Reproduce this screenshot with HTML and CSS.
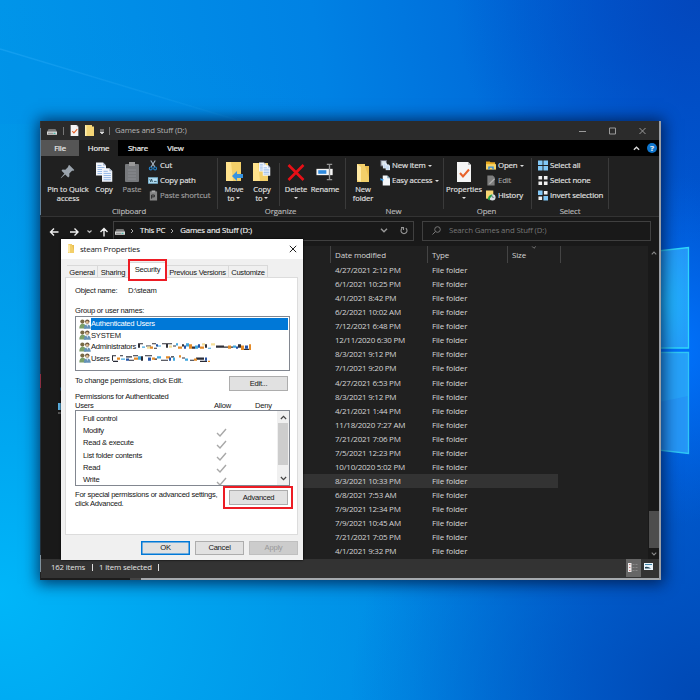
FILE: index.html
```
<!DOCTYPE html>
<html lang="en">
<head>
<meta charset="utf-8">
<title>Games and Stuff (D:)</title>
<link rel="stylesheet" href="styles.css">
</head>
<body>
<svg width="0" height="0" class="defs">
  <symbol id="drive" viewBox="0 0 10 6"><path d="M1.5 0h7l1.5 3H0z" fill="#777"/><rect y="2.6" width="10" height="3.2" fill="#d8d8d8"/><rect x="6.5" y="3.8" width="2" height="1" fill="#2a9"/><rect x="1" y="3.8" width="5" height="1" fill="#888"/></symbol>
  <symbol id="sheet" viewBox="0 0 16 20"><path d="M1 0h11l3 3v17H1z" fill="#f4f4f4"/><path d="M12 0v3h3" fill="#bbb"/><path d="M4 11l3 3.5 6-7" fill="none" stroke="#e8622a" stroke-width="2"/></symbol>
  <symbol id="folder" viewBox="0 0 12 18"><path d="M0 0h8v2h4v16H0z" fill="#f3cf69"/><path d="M0 0l4 3v15l-4-2z" fill="#ffe9a3"/><path d="M8 2h4v12z" fill="#e9bd50"/></symbol>
  <symbol id="page" viewBox="0 0 10 13"><path d="M0 0h7l3 3v10H0z" fill="#f2f5fb"/><path d="M7 0v3h3" fill="#aab8cc"/><path d="M1.5 3h4M1.5 5h7M1.5 7h7M1.5 9h7M1.5 11h7" stroke="#8eb4e4" stroke-width=".9"/></symbol>
  <symbol id="people" viewBox="0 0 12 10"><circle cx="3.4" cy="2.6" r="2.1" fill="#786a45"/><path d="M.3 9.5Q.3 4.8 3.7 4.8T7 9.5z" fill="#7ca06a"/><circle cx="8.3" cy="2.6" r="2.2" fill="#6d5740"/><circle cx="8.2" cy="3.3" r="1.3" fill="#e0bd92"/><path d="M4.8 9.8Q4.8 5.4 8.2 5.4T11.8 9.8z" fill="#6592b8"/><path d="M7.4 5.5h1.8l-.9 2.4z" fill="#eee"/></symbol>
  <symbol id="tick" viewBox="0 0 11 9"><path d="M1 5l3 3 6-7" fill="none" stroke="#a8a8a8" stroke-width="1.4"/></symbol>
  <symbol id="down" viewBox="0 0 8 5"><path d="M1 .8l3 3 3-3" fill="none" stroke="currentColor" stroke-width="1.4"/></symbol>
</svg>

<div class="desktop">
  <svg class="wallpaper" viewBox="0 0 700 700" preserveAspectRatio="none">
    <defs>
      <linearGradient id="base" x1="0" y1=".45" x2="1" y2=".3"><stop offset="0" stop-color="#0098ea"/><stop offset=".5" stop-color="#0082e4"/><stop offset="1" stop-color="#0056d0"/></linearGradient>
      <radialGradient id="bl" cx="0" cy=".85" r=".85"><stop offset="0" stop-color="#00b6f9"/><stop offset=".4" stop-color="#00a4ee" stop-opacity=".75"/><stop offset="1" stop-color="#0090e0" stop-opacity="0"/></radialGradient>
      <radialGradient id="br" cx="1" cy="1" r=".5"><stop offset="0" stop-color="#0048b4"/><stop offset="1" stop-color="#0054c4" stop-opacity="0"/></radialGradient>
      <radialGradient id="tr" cx="1" cy="0" r=".35"><stop offset="0" stop-color="#0347bc"/><stop offset="1" stop-color="#004cc4" stop-opacity="0"/></radialGradient>
      <radialGradient id="glow" cx=".95" cy=".5" r=".25"><stop offset="0" stop-color="#0074ff"/><stop offset="1" stop-color="#0068f0" stop-opacity="0"/></radialGradient>
      <radialGradient id="pane" cx=".5" cy=".55" r=".7"><stop offset="0" stop-color="#20b8ff"/><stop offset="1" stop-color="#2596f8"/></radialGradient>
      <linearGradient id="beam" x1="0" y1="0" x2="1" y2="0"><stop offset="0" stop-color="#3cb4ff" stop-opacity=".3"/><stop offset="1" stop-color="#3cb4ff" stop-opacity=".08"/></linearGradient>
    </defs>
    <rect width="700" height="700" fill="url(#base)"/>
    <rect width="700" height="700" fill="url(#bl)"/>
    <rect width="700" height="700" fill="url(#br)"/>
    <rect width="700" height="700" fill="url(#tr)"/>
    <rect width="700" height="700" fill="url(#glow)"/>
    <path d="M0 49L250 124" stroke="url(#beam)" stroke-width="1.5"/>
    <path d="M0 50L250 124H0z" fill="#008cf0" opacity=".12"/>
    <path d="M640 253L688.500 247.500V348H640z" fill="url(#pane)" stroke="#2fd8fa" stroke-width="1.3"/>
    <path d="M640 352.500H688.500V453.500L640 448z" fill="#2596f6" stroke="#2fc8f6" stroke-width="1.3"/>
    <path d="M640 406L688 396V353H640z" fill="#28acfa" opacity=".55"/>
  </svg>

  <main class="explorer">
    <header class="titlebar">
      <svg class="drive"><use href="#drive"/></svg><i class="bar"></i>
      <svg class="qsheet"><use href="#sheet"/></svg>
      <svg class="qfolder" viewBox="0 0 9 11"><path d="M0 0h7v1.500h2V11H0z" fill="#f5d677"/><path d="M0 0l1.500 1v10H0z" fill="#ffefb0"/></svg>
      <svg class="qmore" viewBox="0 0 6 6"><path d="M1 1h4M1 3h4L3 5z" stroke="#ddd" fill="#ddd" stroke-width=".8"/></svg><i class="bar"></i>
      <span class="wtitle">Games and Stuff (D:)</span>
      <svg class="controls" viewBox="0 0 70 8"><path d="M1 4.500h7M31.500 1h6v6h-6zM61.500 1l6 6M67.500 1l-6 6" fill="none" stroke="#9a9a9a"/></svg>
    </header>
    <nav class="tabs">
      <span class="file">File</span><span class="home">Home</span><span class="share">Share</span><span class="view">View</span>
      <svg class="collapse" viewBox="0 0 8 5"><path d="M1 4l3-3 3 3" fill="none" stroke="#ddd" stroke-width="1.5"/></svg>
      <span class="help">?</span>
    </nav>

    <section class="ribbon">
      <div class="group clipboard">
        <div class="tools">
          <div class="big pin"><svg viewBox="0 0 16 20"><path d="M9.300 3l5 5-1.200.9-.8-.3-3 3 .1 2.700-1.200 1.100-3-3L1 16.200l-.3-.3 3.700-4.300-2.900-2.900 1-1.200 2.800.2 3-3-.3-.8z" fill="#9ba4ad"/></svg><span>Pin to Quick<br>access</span></div>
          <div class="big copy"><svg viewBox="0 0 18 20"><use href="#page" x="1" y="0" width="10" height="14"/><use href="#page" x="7" y="6" width="10.500" height="14"/></svg><span>Copy</span></div>
          <div class="big paste"><svg viewBox="0 0 14 20"><rect x="0" y="2" width="14" height="18" rx="1" fill="#77797c"/><rect x="4" y="0" width="6" height="4" fill="#999"/><path d="M3 8h8M3 11h8M3 14h8M3 17h8" stroke="#8b8d91"/></svg><span>Paste</span></div>
          <div class="small">
            <div><svg viewBox="0 0 11 11"><path d="M3 0l4.500 7M8 0L3.500 7" stroke="#a8b6c4" stroke-width="1.200"/><circle cx="3" cy="8.700" r="1.600" fill="none" stroke="#2485cf" stroke-width="1.200"/><circle cx="7.800" cy="8.700" r="1.600" fill="none" stroke="#2485cf" stroke-width="1.200"/></svg>Cut</div>
            <div><svg viewBox="0 0 11 11"><rect x=".5" y="2.500" width="10" height="6" fill="#b9e2f5" stroke="#7db9d8"/><path d="M2 4l1 3 1-3 1 3M6.500 6.500h3" fill="none" stroke="#134" stroke-width=".8"/></svg>Copy path</div>
            <div class="dim"><svg viewBox="0 0 11 11"><rect x="2" y="1" width="8" height="10" fill="#858585"/><rect x="4" width="4" height="2" fill="#aaa"/><path d="M4 9V5h3v2H4" fill="none" stroke="#222"/></svg>Paste shortcut</div>
          </div>
        </div>
        <footer>Clipboard</footer>
      </div>
      <div class="group organize">
        <div class="tools">
          <div class="big move"><svg viewBox="0 0 18 20"><rect x="1" width="15" height="19" fill="#f3cf69"/><path d="M1 0h5l2 19H1z" fill="#ffe28c"/><path d="M7 14l5-5v3h6v4h-6v3z" fill="#3793e0"/></svg><span>Move<br>to <b></b></span></div>
          <div class="big copyto"><svg viewBox="0 0 18 20"><rect x="0" y="1" width="15" height="18" fill="#f3cf69"/><path d="M0 1h5l2 18H0z" fill="#ffe28c"/><use href="#page" x="6" y="0" width="7" height="10"/><use href="#page" x="9.500" y="3" width="8" height="11"/></svg><span>Copy<br>to <b></b></span></div>
          <i class="split"></i>
          <div class="big delete"><svg viewBox="0 0 18 20"><path d="M1.500 3l15 15M16.500 3l-15 15" stroke="#e80f16" stroke-width="2.600"/></svg><span>Delete<br><b></b></span></div>
          <div class="big rename"><svg viewBox="0 0 20 20"><rect x=".5" y="6.500" width="18" height="7" fill="#f5f5f5"/><rect x="2.500" y="8" width="9" height="4" fill="#2f8ade"/><path d="M12 1.500h2.500L15 2l.5-.5H18M15 2v16M12 18.500h2.500L15 18l.5.5H18" stroke="#929292" stroke-width="1.500" fill="none"/></svg><span>Rename</span></div>
        </div>
        <footer>Organize</footer>
      </div>
      <div class="group new">
        <div class="tools">
          <div class="big newfolder"><svg viewBox="0 0 18 20"><use href="#folder" x="3" y="2" width="12" height="18"/></svg><span>New<br>folder</span></div>
          <div class="small">
            <div><svg viewBox="0 0 11 11"><rect x="1" width="6" height="6" fill="#d4dce4" stroke="#667"/><use href="#page" x="3" y="2" width="5" height="7"/><use href="#page" x="6" y="4" width="5" height="7"/></svg>New item <b></b></div>
            <div><svg viewBox="0 0 11 11"><path d="M3 0h5l3 3v8H3z" fill="#f4f7fa"/><path d="M8 0v3h3" fill="#8ab"/><path d="M0 3l4 1-1 3-1-2-1 1z" fill="#3b99e0"/></svg>Easy access <b></b></div>
          </div>
        </div>
        <footer>New</footer>
      </div>
      <div class="group open">
        <div class="tools">
          <div class="big props"><svg viewBox="0 0 18 20"><use href="#sheet" x="1" y="0" width="16" height="20"/></svg><span>Properties<br><b></b></span></div>
          <div class="small">
            <div><svg viewBox="0 0 11 11"><path d="M0 1h4l1 1h5v7H0z" fill="#e9a91f"/><path d="M0 4h11v6H0z" fill="#f8d568"/><path d="M2.500 10V6.500h6V10H7V8H4v2z" fill="#2f8ade"/></svg>Open <b></b></div>
            <div class="dim"><svg viewBox="0 0 11 11"><path d="M1.500 0h6l2 2v9h-8z" fill="#7e7e7e"/><path d="M10 4L5 9l-2 1 1-2 5-5z" fill="#b0b0b0"/></svg>Edit</div>
            <div><svg viewBox="0 0 11 11"><path d="M0 0h8v9H0z" fill="#f7d673"/><circle cx="7" cy="7.500" r="3.500" fill="#d7dde0"/><path d="M2 10q0-5 5-6L6 7q-2 1-2 4z" fill="#25a244"/><path d="M7 5.500v2h2" stroke="#456" fill="none" stroke-width=".7"/></svg>History</div>
          </div>
        </div>
        <footer>Open</footer>
      </div>
      <div class="group select">
        <div class="tools">
          <div class="small">
            <div><svg viewBox="0 0 11 11"><path d="M0 0h5v5H0zM6 0h5v5H6zM0 6h5v5H0zM6 6h5v5H6z" fill="#82c7f5"/></svg>Select all</div>
            <div><svg viewBox="0 0 11 11"><path d="M.5.500h4v4h-4zM6.500.500h4v4h-4zM.5 6.500h4v4h-4zM6.500 6.500h4v4h-4z" fill="#f0f0f0"/></svg>Select none</div>
            <div><svg viewBox="0 0 11 11"><path d="M0 0h5v5H0zM6 6h5v5H6z" fill="#82c7f5"/><path d="M6.500.500h4v4h-4zM.5 6.500h4v4h-4z" fill="#f0f0f0"/></svg>Invert selection</div>
          </div>
        </div>
        <footer>Select</footer>
      </div>
    </section>

    <section class="address">
      <svg class="arrows" viewBox="0 0 62 10"><path d="M9.500 5H2M5 1.500L1.500 5 5 8.500M21 5h7.500M25.500 1.500L29 5l-3.500 3.500M55 9.500V2M51.500 5L55 1.500 58.500 5" fill="none" stroke="#f0f0f0" stroke-width="1.400"/><path d="M38.500 3.500l2 2 2-2" fill="none" stroke="#bbb" stroke-width="1.200"/></svg>
      <div class="path">
        <svg class="drive"><use href="#drive"/></svg><svg class="chev" viewBox="0 0 4 6"><path d="M1 1l2 2-2 2" stroke="#aaa" fill="none"/></svg><span class="pc">This PC</span><svg class="chev" viewBox="0 0 4 6"><path d="M1 1l2 2-2 2" stroke="#aaa" fill="none"/></svg><span class="vol">Games and Stuff (D:)</span>
        <svg class="drop"><use href="#down"/></svg>
        <svg class="refresh" viewBox="0 0 8 9"><path d="M2.200 2.300A3 3 0 1 0 5.800 2.300M1 1.500h2.500V4" fill="none" stroke="#999" stroke-width="1.100"/></svg>
      </div>
      <div class="search"><svg viewBox="0 0 9 9"><circle cx="5.500" cy="3.500" r="2.800" fill="none" stroke="#777"/><path d="M3.500 5.500L.5 8.500" stroke="#777"/></svg><span>Search Games and Stuff (D:)</span></div>
    </section>

    <section class="body">
      <aside class="navpane"><svg viewBox="0 0 5 30"><path d="M5 2a3.500 3.500 0 0 0 0 6z" fill="#1684d8"/><path d="M1 19h4v7H1z" fill="#5aaede"/><path d="M1 29h4" stroke="#999"/></svg></aside>
      <div class="list">
        <div class="head"><span class="date">Date modified</span><span class="type">Type</span><span class="size">Size<svg><use href="#down"/></svg></span></div>
        <div class="row"><span class="date">4/27/2021 2:12 PM</span><span class="type">File folder</span></div>
        <div class="row"><span class="date">6/1/2021 10:25 PM</span><span class="type">File folder</span></div>
        <div class="row"><span class="date">4/1/2021 8:42 PM</span><span class="type">File folder</span></div>
        <div class="row"><span class="date">6/2/2021 10:02 AM</span><span class="type">File folder</span></div>
        <div class="row"><span class="date">7/12/2021 6:48 PM</span><span class="type">File folder</span></div>
        <div class="row"><span class="date">12/11/2020 6:30 PM</span><span class="type">File folder</span></div>
        <div class="row"><span class="date">8/3/2021 9:12 PM</span><span class="type">File folder</span></div>
        <div class="row"><span class="date">7/1/2021 9:20 PM</span><span class="type">File folder</span></div>
        <div class="row"><span class="date">4/27/2021 6:53 PM</span><span class="type">File folder</span></div>
        <div class="row"><span class="date">8/3/2021 9:12 PM</span><span class="type">File folder</span></div>
        <div class="row"><span class="date">4/21/2021 1:44 PM</span><span class="type">File folder</span></div>
        <div class="row"><span class="date">11/18/2020 7:27 AM</span><span class="type">File folder</span></div>
        <div class="row"><span class="date">7/21/2021 7:06 PM</span><span class="type">File folder</span></div>
        <div class="row"><span class="date">7/5/2021 12:23 PM</span><span class="type">File folder</span></div>
        <div class="row"><span class="date">10/10/2020 5:02 PM</span><span class="type">File folder</span></div>
        <div class="row current"><span class="date">8/3/2021 10:33 PM</span><span class="type">File folder</span></div>
        <div class="row"><span class="date">6/8/2021 7:53 AM</span><span class="type">File folder</span></div>
        <div class="row"><span class="date">7/9/2021 12:34 PM</span><span class="type">File folder</span></div>
        <div class="row"><span class="date">7/9/2021 10:45 AM</span><span class="type">File folder</span></div>
        <div class="row"><span class="date">7/21/2021 7:05 PM</span><span class="type">File folder</span></div>
        <div class="row"><span class="date">4/1/2021 9:32 PM</span><span class="type">File folder</span></div>
      </div>
      <div class="scroll"><svg class="up"><use href="#down"/></svg><i></i><svg><use href="#down"/></svg></div>
    </section>
    <footer class="status"><span class="items">162 items</span><i></i><span class="sel">1 item selected</span><i></i>
      <span class="mode on"><svg viewBox="0 0 14 19"><rect x="2" y="4" width="3.500" height="9" fill="#eee"/><path d="M3.800 5v7" stroke="#b55" stroke-dasharray="1 2"/><path d="M6.500 5.500h6M6.500 8.500h6M6.500 11.500h6" stroke="#888" stroke-dasharray="2 1"/></svg></span>
      <span class="mode"><svg viewBox="0 0 14 19"><rect x="3" y="4" width="9" height="7" fill="#eaf4fc"/><path d="M4 5.500h7" stroke="#48a"/><path d="M4 8q3-1 6 1.500H4z" fill="#245"/></svg></span>
    </footer>
    <div class="below"></div>
  </main>

  <section class="dialog">
    <header><svg class="dfolder"><use href="#folder"/></svg><span>steam Properties</span><svg class="close" viewBox="0 0 8 8"><path d="M.8.8l6.400 6.400M7.200.8L.8 7.200" stroke="#222"/></svg></header>
    <nav><span class="t1">General</span><span class="t2">Sharing</span><span class="t3">Security</span><span class="t4">Previous Versions</span><span class="t5">Customize</span></nav>
    <div class="sheet">
      <p class="object"><span>Object name:</span><span>D:\steam</span></p>
      <p class="names">Group or user names:</p>
      <ul class="users">
        <li class="chosen"><svg><use href="#people"/></svg><span class="u1">Authenticated Users</span></li>
        <li><svg><use href="#people"/></svg><span class="u2">SYSTEM</span></li>
        <li><svg><use href="#people"/></svg><span class="u3">Administrators</span>
          <svg class="mosaic m1" viewBox="0 0 113 8" preserveAspectRatio="none">
            <path d="M0 1h5v1H0zM0 2h2v3H0zM8 3h5v1H8zM14 1h4v1h-4zM16 5h3v1h-3zM24 1h10v1H24zM28 2h2v3h-2zM35 3h3v1h-3zM44 2h2v2h-2zM54 4h3v2h-3zM67 2h2v3h-2zM78 3h8v2h-8zM86 4h9v1h-9zM100 2h3v3h-3zM106 6h6v1h-6z" fill="#303038"/>
            <path d="M4 4h3v1H4zM19 3h4v1h-4zM38 1h2v2h-2zM48 1h3v3h-3zM57 3h3v3h-3zM70 5h3v1h-3zM95 3h3v2h-3z" fill="#3fa7df"/>
            <path d="M12 4h3v2h-3zM40 4h4v2h-4zM51 2h3v4h-3zM62 4h4v2h-4zM90 3h3v3h-3zM103 3h3v4h-3zM111 2h2v5h-2z" fill="#e48b28"/>
            <path d="M18 2h2v2h-2zM46 3h2v3h-2zM60 2h2v3h-2zM98 4h2v2h-2zM107 3h3v3h-3z" fill="#2553a5"/>
            <path d="M9 4h3v2H9zM31 3h3v2h-3zM73 1h4v2h-4zM64 1h3v2h-3z" fill="#f5df9a"/>
          </svg></li>
        <li><svg><use href="#people"/></svg><span class="u4">Users</span>
          <svg class="mosaic m2" viewBox="0 0 98 8" preserveAspectRatio="none">
            <path d="M0 1h4v1H0zM0 2h1v4H0zM1 6h5v1H1zM8 1h3v1H8zM14 2h6v1h-6zM21 1h5v1h-5zM17 5h5v1h-5zM29 2h2v4h-2zM33 1h7v1h-7zM42 4h3v1h-3zM49 5h7v1h-7zM59 2h3v1h-3zM70 3h3v1h-3zM78 5h4v1h-4zM84 3h8v2h-8zM88 6h7v1h-7z" fill="#292b36"/>
            <path d="M5 3h3v2H5zM22 3h4v2h-4zM40 3h3v2h-3zM54 2h4v2h-4zM67 1h2v2h-2zM82 4h3v2h-3zM96 6h2v1h-2z" fill="#e48b28"/>
            <path d="M9 4h4v1H9zM26 2h3v3h-3zM45 2h4v2h-4zM61 3h2v3h-2zM73 4h3v2h-3z" fill="#3fa7df"/>
            <path d="M14 4h3v2h-3zM36 3h3v3h-3zM57 3h2v3h-2zM93 3h2v3h-2z" fill="#2553a5"/>
          </svg></li>
      </ul>
      <div class="edit"><span>To change permissions, click Edit.</span><button>Edit...</button></div>
      <div class="permhead"><span class="who">Permissions for Authenticated<br>Users</span><span class="allow">Allow</span><span class="deny">Deny</span></div>
      <div class="perms">
        <ul>
          <li><span class="p1">Full control</span></li>
          <li><span class="p2">Modify</span><svg><use href="#tick"/></svg></li>
          <li><span class="p3">Read &amp; execute</span><svg><use href="#tick"/></svg></li>
          <li><span class="p4">List folder contents</span><svg><use href="#tick"/></svg></li>
          <li><span class="p5">Read</span><svg><use href="#tick"/></svg></li>
          <li><span class="p6">Write</span><svg><use href="#tick"/></svg></li>
        </ul>
        <div class="pscroll"><svg class="up"><use href="#down"/></svg><i></i><svg><use href="#down"/></svg></div>
      </div>
      <div class="special"><span>For special permissions or advanced settings,<br>click Advanced.</span><button>Advanced</button></div>
    </div>
    <footer><button class="ok">OK</button><button>Cancel</button><button class="off">Apply</button></footer>
    <i class="mark security"></i><i class="mark advanced"></i>
  </section>
</div>
</body>
</html>
```
FILE: styles.css
```
* { box-sizing: border-box; }
body { margin: 0; font-family: "Open Sans", "Noto Sans", sans-serif; font-size: 7.8px; letter-spacing: -.15px; line-height: 9px; color: #e4e4e4; }
svg { display: block; flex: none; overflow: visible; }
i { display: block; flex: none; font-style: normal; }
span { white-space: nowrap; }
p, ul { margin: 0; padding: 0; list-style: none; }
.defs { position: absolute; }
.desktop { position: relative; width: 700px; height: 700px; overflow: hidden; }
.wallpaper { width: 700px; height: 700px; }

/* Explorer window */
.explorer { position: absolute; left: 41px; top: 121px; width: 620px; height: 459px; background: #202020; border-right: 2px solid #9b9fa5; display: flex; flex-direction: column; box-shadow: 0 1px 14px 3px rgba(0, 20, 60, .75); }
/* Sliver of the window behind, visible along the left edge */
.explorer::before { content: ""; position: absolute; left: -1px; top: 0; width: 1px; height: 459px; background: linear-gradient(#333 7px, #5f7f98 7px 94px, #20303c 94px 253px, #8a2f42 253px 267px, #20303c 267px 434px, #7f929e 434px 451px, #222 451px); }
.titlebar { height: 19px; background: #2b2b2b; display: flex; align-items: center; color: #b4b4b4; flex: none; padding-left: 6px; }
.drive { width: 10px; height: 6px; margin-top: 2px; }
.bar { width: 1px; height: 8px; background: #777; margin-left: 6px; }
.qsheet { width: 9px; height: 11px; margin-left: 6px; }
.qfolder { width: 9px; height: 11px; margin-left: 6px; }
.qmore { width: 6px; height: 6px; margin: 2px 0 0 5px; }
.qmore + .bar { margin-left: 4px; }
.wtitle { margin-left: 5px; }
.controls { width: 70px; height: 8px; margin: 0 11px 0 auto; }
.tabs { height: 16px; background: #000; display: flex; align-items: stretch; flex: none; line-height: 16px; text-align: center; color: #eee; -webkit-text-stroke: .2px; }
.file { width: 38px; background: #555; }
.home { width: 39px; background: #202020; }
.share { width: 40px; }
.view { width: 35px; }
.collapse { width: 7px; height: 5px; margin: 6px 7px 0 auto; }
.help { width: 10px; height: 10px; margin: 3px 2px 0 0; border-radius: 5px; background: #0f76ce; line-height: 10px; font-weight: bold; }

.ribbon { height: 61px; flex: none; background: #202020; display: flex; border-bottom: 1px solid #333; -webkit-text-stroke: .15px; }
.group { border-right: 1px solid #3a3a3a; margin: 2px 0 6px; height: 51px; }
.tools { height: 48px; display: flex; }
.group > footer { text-align: center; height: 10px; line-height: 10px; color: #b9b9b9; padding-right: 4px; }
.clipboard { width: 177px; padding-left: 5px; }
.clipboard > footer { padding-right: 5px; }
.organize { width: 128px; padding-left: 2px; }
.new { width: 98px; padding-left: 2px; }
.open { width: 88px; padding-left: 0; }
.open > footer { padding-right: 2px; }
.select { width: 77px; padding-left: 4px; }
.big { display: flex; flex-direction: column; align-items: center; text-align: center; padding-top: 4px; flex: none; font-size: 7.5px; letter-spacing: -.05px; }
.big > svg { width: 18px; height: 20px; }
.big > span { margin-top: 3px; }
.pin { width: 44px; }
.copy, .paste, .move, .copyto, .delete { width: 28px; }
.paste, .dim { color: #a0a0a0; }
.split { width: 1px; margin: 5px 2px 0 3px; background: #3a3a3a; }
.rename { width: 30px; }
.newfolder { width: 30px; }
.props { width: 40px; }
.tools b { display: inline-block; border: 2px solid transparent; border-top: 2px solid #ddd; border-bottom: 0; vertical-align: 2px; }
.small { margin-left: 2px; padding-top: 1px; flex: none; }
.small > div { height: 14.7px; display: flex; align-items: center; white-space: pre; padding-bottom: 1px; }
.small b { margin-left: 1px; }
.small > div > svg { width: 10px; height: 11px; margin-right: 2px; }

.address { height: 29px; flex: none; background: #191919; display: flex; padding-top: 4px; }
.arrows { width: 62px; height: 10px; margin: 6px 0 0 8px; }
.path { width: 301px; height: 20px; border: 1px solid #404040; margin-left: 2px; display: flex; align-items: center; padding: 0 0 1px 1px; color: #eee; -webkit-text-stroke: .15px; }
.chev { width: 4px; height: 6px; margin-left: 5px; }
.pc { margin-left: 6px; }
.vol { margin-left: 6px; }
.drop { width: 8px; height: 5px; color: #999; margin-left: auto; }
.refresh { width: 8px; height: 9px; margin: 0 5px 0 12px; }
.search { width: 229px; height: 20px; border: 1px solid #404040; margin-left: 8px; display: flex; align-items: center; color: #777; padding: 0 0 1px 9px; }
.search > svg { width: 9px; height: 9px; margin-right: 8px; }

.body { height: 313px; display: flex; flex: none; background: #191919; }
.navpane { width: 20px; padding: 138px 0 0 16px; }
.navpane > svg { width: 5px; height: 30px; }
.list { width: 587px; background: #202020; color: #d4d4d4; padding-left: 242px; font-size: 8px; }
.head { height: 17px; display: flex; align-items: center; margin-left: 27px; }
.head > span { border-left: 1px solid #444; height: 17px; line-height: 17px; padding-left: 4px; }
.head .date { width: 97px; }
.head .type { width: 80px; }
.size { width: 54px; border-right: 1px solid #444; position: relative; }
.size svg { position: absolute; width: 6px; height: 3px; left: 23px; top: 0; color: #888; }
.row { height: 14.07px; line-height: 14.07px; display: flex; padding-left: 32px; }
.row .date { width: 97px; letter-spacing: -.25px; }
.current { background: #333; margin-right: 90px; }
.scroll { width: 11px; display: flex; flex-direction: column; align-items: center; padding: 5px 0 3px; }
.scroll svg { width: 6px; height: 4px; color: #888; }
.up { transform: scaleY(-1); }
.scroll i { width: 10px; height: 37px; background: #4d4d4d; margin: auto 0 4px; }
.status { height: 18px; background: #333; flex: none; display: flex; align-items: center; padding: 0 0 1px 10px; }
.status > i { width: 1px; height: 7px; background: #ddd; margin: 0 6.5px; }
.mode { width: 15px; height: 18px; }
.mode:not(.on) { margin-right: 3px; }
.mode.on { margin-left: auto; background: #666; }
.mode > svg { width: 14px; height: 19px; }
.below { height: 3px; background: linear-gradient(90deg, #1c1c1c 89px, #444 89px 100px, #a6aaae 100px); flex: none; border-top: 1px solid #333; }

/* Properties dialog */
.dialog { position: absolute; left: 61px; top: 239px; width: 242px; height: 321px; background: #f0f0f0; font-family: "Liberation Sans", Arial, sans-serif; font-size: 7.6px; letter-spacing: -.24px; color: #151515; box-shadow: 0 0 2px #000; }
.dialog > header { height: 20px; background: #fff; display: flex; align-items: center; font-family: "Open Sans", sans-serif; font-size: 8px; letter-spacing: -.25px; padding: 0 0 1px 7px; }
.dfolder { width: 6px; height: 9px; }
.dialog > header > span { margin-left: 6px; }
.close { width: 8px; height: 8px; margin: 0 6px 0 auto; }
.dialog > nav { height: 18px; padding: 6px 0 0 6px; display: flex; text-align: center; line-height: 13px; }
.dialog > nav > span { border: 1px solid #d9d9d9; border-bottom: 0; border-left: 0; height: 12px; }
.t1 { width: 31px; }
.t2 { width: 31px; }
.dialog > nav > .t3 { width: 38px; height: 16px; margin-top: -3px; background: #fff; line-height: 14px; }
.t4 { width: 62px; }
.t5 { width: 39px; }
.sheet { margin: 0 5px 0 4px; height: 258px; background: #fff; border: 1px solid #dcdcdc; padding: 0 8px 0 9px; }
.object { padding-top: 8px; display: flex; line-height: 10px; }
.object span:first-child { width: 53px; }
.names { padding-top: 10px; line-height: 10px; }
.users { width: 215px; height: 55px; border: 1px solid #828790; padding: 1px 1px 0 3px; }
.users li { height: 11.500px; display: flex; align-items: center; line-height: 11.500px; }
.users li > svg:first-child { width: 12px; height: 10px; }
.chosen span { flex: 1; background: #0078d7; color: #fff; }
.users .mosaic { height: 9px; }
.m1 { width: 113px; margin-left: 2px; }
.m2 { width: 98px; margin-left: 2px; }
button { font: inherit; letter-spacing: inherit; color: inherit; background: #e1e1e1; border: 1px solid #adadad; padding: 0; height: 15px; width: 59px; line-height: 13px; flex: none; display: block; }
.edit { display: flex; justify-content: space-between; padding: 5px 1px 0 0; }
.edit > span { letter-spacing: -.18px; }
.permhead { display: flex; height: 19px; align-items: flex-end; }
.who { width: 139px; }
.allow { width: 41px; }
.perms { width: 215px; height: 76px; border: 1px solid #828790; display: flex; overflow: hidden; }
.perms ul { flex: 1; padding: 2px 0 0 7px; }
.perms li { height: 12.200px; line-height: 12.200px; display: flex; align-items: center; justify-content: space-between; padding-right: 50px; }
.perms li svg { width: 11px; height: 9px; margin-top: 2px; }
.pscroll { width: 12px; background: #f0f0f0; display: flex; flex-direction: column; align-items: center; padding: 4px 0; color: #444; }
.pscroll svg { width: 7px; height: 5px; }
.pscroll i { width: 10px; height: 42px; background: #cdcdcd; margin: 3px 0 auto; }
.special { display: flex; justify-content: space-between; padding: 4px 1px 0 0; line-height: 9px; letter-spacing: -.26px; }
.dialog > footer { display: flex; justify-content: flex-end; padding: 6px 5px 0; gap: 5px; }
.dialog > footer button { width: 49px; height: 14px; line-height: 12px; }
.dialog .ok { border: 1px solid #0078d7; box-shadow: inset 0 0 0 .5px #0078d7; }
.dialog .off { background: #ccc; border-color: #bfbfbf; color: #999; }
.mark { position: absolute; border: 2px solid #ed1c24; }
.mark.security { left: 67px; top: 20px; width: 39px; height: 22px; }
.mark.advanced { left: 162px; top: 247px; width: 70px; height: 23px; }
```
